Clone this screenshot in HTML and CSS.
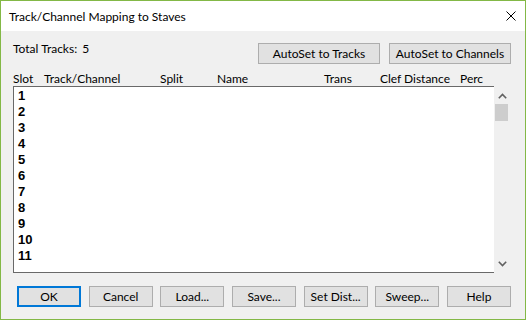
FILE: index.html
```html
<!DOCTYPE html>
<html lang="en">
<head>
  <meta charset="UTF-8" />
  <title>Track/Channel Mapping to Staves</title>
  <link rel="stylesheet" href="styles.css">
</head>
<body>
  <div class="window">
    <div class="titlebar">
      <span class="title">Track/Channel Mapping to Staves</span>
      <svg class="close" width="10" height="10" viewBox="0 0 10 10">
        <path d="M0.5 0.5 L9.5 9.5 M9.5 0.5 L0.5 9.5" stroke="#000" stroke-width="1" fill="none" />
      </svg>
    </div>

    <div class="content">
      <div class="toprow">
        <span class="total">Total Tracks:<span class="count">5</span></span>
        <div class="autoset">
          <button class="btn wide">AutoSet to Tracks</button>
          <button class="btn wide">AutoSet to Channels</button>
        </div>
      </div>

      <div class="header">
        <span class="c-slot">Slot</span>
        <span class="c-track">Track/Channel</span>
        <span class="c-split">Split</span>
        <span class="c-name">Name</span>
        <span class="c-trans">Trans</span>
        <span class="c-clef">Clef</span>
        <span class="c-dist">Distance</span>
        <span class="c-perc">Perc</span>
      </div>

      <div class="listwrap">
        <div class="list">
          <div class="row">1</div>
          <div class="row">2</div>
          <div class="row">3</div>
          <div class="row">4</div>
          <div class="row">5</div>
          <div class="row">6</div>
          <div class="row">7</div>
          <div class="row">8</div>
          <div class="row">9</div>
          <div class="row">10</div>
          <div class="row">11</div>
        </div>
        <div class="scrollbar">
          <div class="arrow">
            <svg width="9" height="6" viewBox="0 0 9 6"><path d="M0.8 5.2 L4.5 1.5 L8.2 5.2" stroke="#606060" stroke-width="1.6" fill="none" /></svg>
          </div>
          <div class="thumb"></div>
          <div class="spacer"></div>
          <div class="arrow">
            <svg width="9" height="6" viewBox="0 0 9 6"><path d="M0.8 0.8 L4.5 4.5 L8.2 0.8" stroke="#606060" stroke-width="1.6" fill="none" /></svg>
          </div>
        </div>
      </div>

      <div class="footer">
        <button class="btn default">OK</button>
        <button class="btn">Cancel</button>
        <button class="btn">Load...</button>
        <button class="btn">Save...</button>
        <button class="btn">Set Dist...</button>
        <button class="btn">Sweep...</button>
        <button class="btn">Help</button>
      </div>
    </div>
  </div>
</body>
</html>
```

FILE: styles.css
```css
* {
  box-sizing: border-box;
}
body {
  margin: 0;
  font-family: Lato, 'Noto Sans', sans-serif;
  font-size: 12px;
  color: #000;
}
.window {
  width: 526px;
  height: 320px;
  border: 1px solid #83b846;
  display: flex;
  flex-direction: column;
  background: #f0f0f0;
}
.titlebar {
  height: 30px;
  background: #fff;
  display: flex;
  align-items: center;
  justify-content: space-between;
  padding: 0 9px 0 8px;
}
.title {
  font-size: 12px;
}
.close {
  display: block;
  margin-top: -1px;
}
.content {
  flex: 1;
  padding: 10px 14px 0 11px;
}
.toprow {
  display: flex;
  justify-content: space-between;
  align-items: flex-start;
  height: 23px;
}
.total {
  line-height: 16px;
  padding-left: 1px;
}
.count {
  margin-left: 5px;
}
.autoset {
  display: flex;
  gap: 9px;
  margin-top: 2px;
}
.btn {
  font-family: Lato, 'Noto Sans', sans-serif;
  font-size: 12px;
  color: #000;
  background: #e1e1e1;
  border: 1px solid #adadad;
  height: 21px;
  width: 64px;
  padding: 0;
  line-height: 18px;
}
.btn.wide {
  width: 122px;
}
.btn.default {
  border: 2px solid #0078d7;
}
.header {
  display: flex;
  margin-top: 7px;
  height: 15px;
  line-height: 15px;
  padding-left: 1px;
  white-space: nowrap;
}
.c-slot { width: 31px; }
.c-track { width: 116px; }
.c-split { width: 57px; }
.c-name { width: 107px; }
.c-trans { width: 56px; }
.c-clef { width: 24px; }
.c-dist { width: 56px; }
.listwrap {
  display: flex;
  height: 187px;
  margin-left: 1px;
}
.list {
  width: 487px;
  background: #fff;
  border: 1px solid #696969;
  border-right: none;
  padding: 1px 0 0 4px;
  overflow: hidden;
}
.row {
  font-family: 'Liberation Sans', Arial, sans-serif;
  font-weight: bold;
  font-size: 13px;
  line-height: 16px;
  height: 16px;
}
.scrollbar {
  width: 17px;
  display: flex;
  flex-direction: column;
  padding: 1px 0;
}
.arrow {
  height: 17px;
  display: flex;
  align-items: center;
  justify-content: center;
}
.thumb {
  height: 17px;
  margin: 0 3px 0 1px;
  background: #cdcdcd;
}
.spacer {
  flex: 1;
}
.footer {
  display: flex;
  justify-content: space-between;
  margin-top: 13px;
  padding-left: 5px;
}
```
